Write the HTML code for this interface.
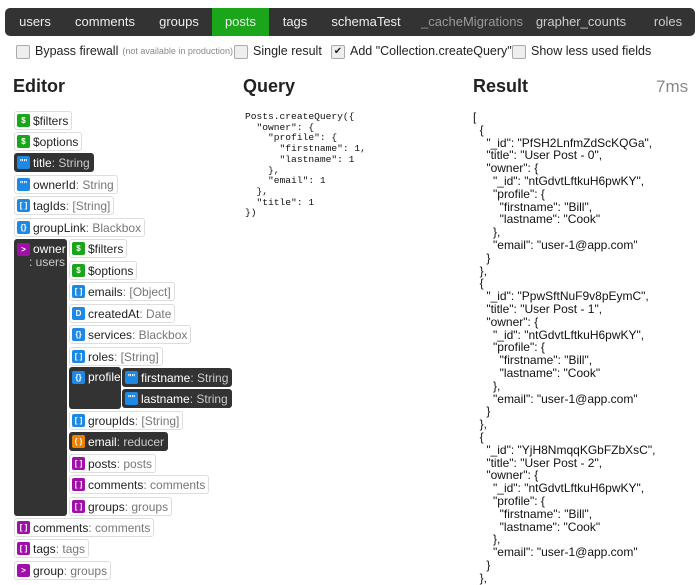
<!DOCTYPE html>
<html><head><meta charset="utf-8"><style>
*{box-sizing:border-box;margin:0;padding:0}
body{width:700px;height:583px;overflow:hidden;background:#fff;font-family:"Liberation Sans",sans-serif;color:#222;position:relative}
.nav{position:absolute;left:5px;top:8px;width:690px;height:28px;background:#333;border-radius:5px;overflow:hidden}
.nav span{position:absolute;top:0;height:28px;line-height:28px;color:#eee;font-size:13px;transform:translateX(-50%)}
.nav .act{background:#1aa51a;left:207px;width:57px;text-align:center;transform:none}
.cb{position:absolute;top:44px;font-size:12.5px;color:#222;line-height:15px;display:flex;align-items:center;white-space:nowrap}
.cb i{display:inline-block;width:14px;height:14px;border:1px solid #aaa;border-radius:2px;background:#eee;margin-right:5px;font-style:normal;font-size:10px;line-height:12px;text-align:center}
.cb small{font-size:9px;color:#888;margin-left:4px}
h2{position:absolute;top:76px;font-size:18px;font-weight:bold}
.it{position:absolute;height:19px;border:1px solid #ddd;border-radius:3px;background:#fff;padding:0 3px 0 2px;font-size:12px;white-space:nowrap;display:flex;align-items:center}
.it b,.lb b{display:inline-block;width:13px;height:13px;border-radius:2px;color:#fff;font-size:8px;line-height:13px;text-align:center;margin-right:3px;font-weight:bold;flex:none}
.it em{font-style:normal;color:#777;white-space:pre}
.d{background:#333;border-color:#333;color:#fff}
.d em{color:#ccc}
.g{background:#1aa51a}.bl{background:#1e88e5}.p{background:#a010a8}.o{background:#f08000}
.blk{position:absolute;background:#333;border-radius:3px}
.lb{position:absolute;font-size:12px;color:#fff;display:flex;align-items:center}
pre.q{position:absolute;left:245px;top:112px;font-family:"Liberation Mono",monospace;font-size:9.6px;line-height:10.7px;color:#111}
pre.r{position:absolute;left:473px;top:111px;font-family:"Liberation Sans",sans-serif;font-size:12px;line-height:12.8px;color:#111}
</style></head><body>
<div class="nav">
<span style="left:30px">users</span>
<span style="left:100px">comments</span>
<span style="left:174px">groups</span>
<span class="act">posts</span>
<span style="left:290px">tags</span>
<span style="left:361px">schemaTest</span>
<span style="left:467px;color:#999">_cacheMigrations</span>
<span style="left:576px;color:#ccc">grapher_counts</span>
<span style="left:663px;color:#ccc">roles</span>
</div>
<div class="cb" style="left:16px"><i></i>Bypass firewall<small>(not available in production)</small></div>
<div class="cb" style="left:234px"><i></i>Single result</div>
<div class="cb" style="left:331px"><i>✔</i>Add "Collection.createQuery"</div>
<div class="cb" style="left:512px"><i></i>Show less used fields</div>
<h2 style="left:13px">Editor</h2>
<h2 style="left:243px">Query</h2>
<h2 style="left:473px">Result</h2>
<div style="position:absolute;left:656px;top:77px;font-size:17px;color:#888">7ms</div>

<div class="it" style="left:14px;top:111px"><b class="g">$</b>$filters</div>
<div class="it" style="left:14px;top:132px"><b class="g">$</b>$options</div>
<div class="it d" style="left:14px;top:153px"><b class="bl">""</b>title<em>: String</em></div>
<div class="it" style="left:14px;top:175px"><b class="bl">""</b>ownerId<em>: String</em></div>
<div class="it" style="left:14px;top:196px"><b class="bl">[ ]</b>tagIds<em>: [String]</em></div>
<div class="it" style="left:14px;top:218px"><b class="bl">{}</b>groupLink<em>: Blackbox</em></div>

<div class="blk" style="left:14px;top:239px;width:53px;height:277px"></div>
<div class="lb" style="left:17px;top:242px"><b class="p">&gt;</b>owner</div>
<div style="position:absolute;left:29px;top:255px;font-size:12px;color:#ccc">: users</div>

<div class="it" style="left:69px;top:239px"><b class="g">$</b>$filters</div>
<div class="it" style="left:69px;top:261px"><b class="g">$</b>$options</div>
<div class="it" style="left:69px;top:282px"><b class="bl">[ ]</b>emails<em>: [Object]</em></div>
<div class="it" style="left:69px;top:304px"><b class="bl">D</b>createdAt<em>: Date</em></div>
<div class="it" style="left:69px;top:325px"><b class="bl">{}</b>services<em>: Blackbox</em></div>
<div class="it" style="left:69px;top:347px"><b class="bl">[ ]</b>roles<em>: [String]</em></div>
<div class="blk" style="left:69px;top:367px;width:52px;height:42px"></div>
<div class="lb" style="left:72px;top:370px"><b class="bl">{}</b>profile</div>
<div class="it d" style="left:122px;top:368px"><b class="bl">""</b>firstname<em>: String</em></div>
<div class="it d" style="left:122px;top:389px"><b class="bl">""</b>lastname<em>: String</em></div>
<div class="it" style="left:69px;top:411px"><b class="bl">[ ]</b>groupIds<em>: [String]</em></div>
<div class="it d" style="left:69px;top:432px"><b class="o">( )</b>email<em>: reducer</em></div>
<div class="it" style="left:69px;top:454px"><b class="p">[ ]</b>posts<em>: posts</em></div>
<div class="it" style="left:69px;top:475px"><b class="p">[ ]</b>comments<em>: comments</em></div>
<div class="it" style="left:69px;top:497px"><b class="p">[ ]</b>groups<em>: groups</em></div>
<div class="it" style="left:14px;top:518px"><b class="p">[ ]</b>comments<em>: comments</em></div>
<div class="it" style="left:14px;top:539px"><b class="p">[ ]</b>tags<em>: tags</em></div>
<div class="it" style="left:14px;top:561px"><b class="p">&gt;</b>group<em>: groups</em></div>

<pre class="q">Posts.createQuery({
  "owner": {
    "profile": {
      "firstname": 1,
      "lastname": 1
    },
    "email": 1
  },
  "title": 1
})</pre>

<pre class="r">[
  {
    "_id": "PfSH2LnfmZdScKQGa",
    "title": "User Post - 0",
    "owner": {
      "_id": "ntGdvtLftkuH6pwKY",
      "profile": {
        "firstname": "Bill",
        "lastname": "Cook"
      },
      "email": "user-1@app.com"
    }
  },
  {
    "_id": "PpwSftNuF9v8pEymC",
    "title": "User Post - 1",
    "owner": {
      "_id": "ntGdvtLftkuH6pwKY",
      "profile": {
        "firstname": "Bill",
        "lastname": "Cook"
      },
      "email": "user-1@app.com"
    }
  },
  {
    "_id": "YjH8NmqqKGbFZbXsC",
    "title": "User Post - 2",
    "owner": {
      "_id": "ntGdvtLftkuH6pwKY",
      "profile": {
        "firstname": "Bill",
        "lastname": "Cook"
      },
      "email": "user-1@app.com"
    }
  },</pre>
</body></html>
